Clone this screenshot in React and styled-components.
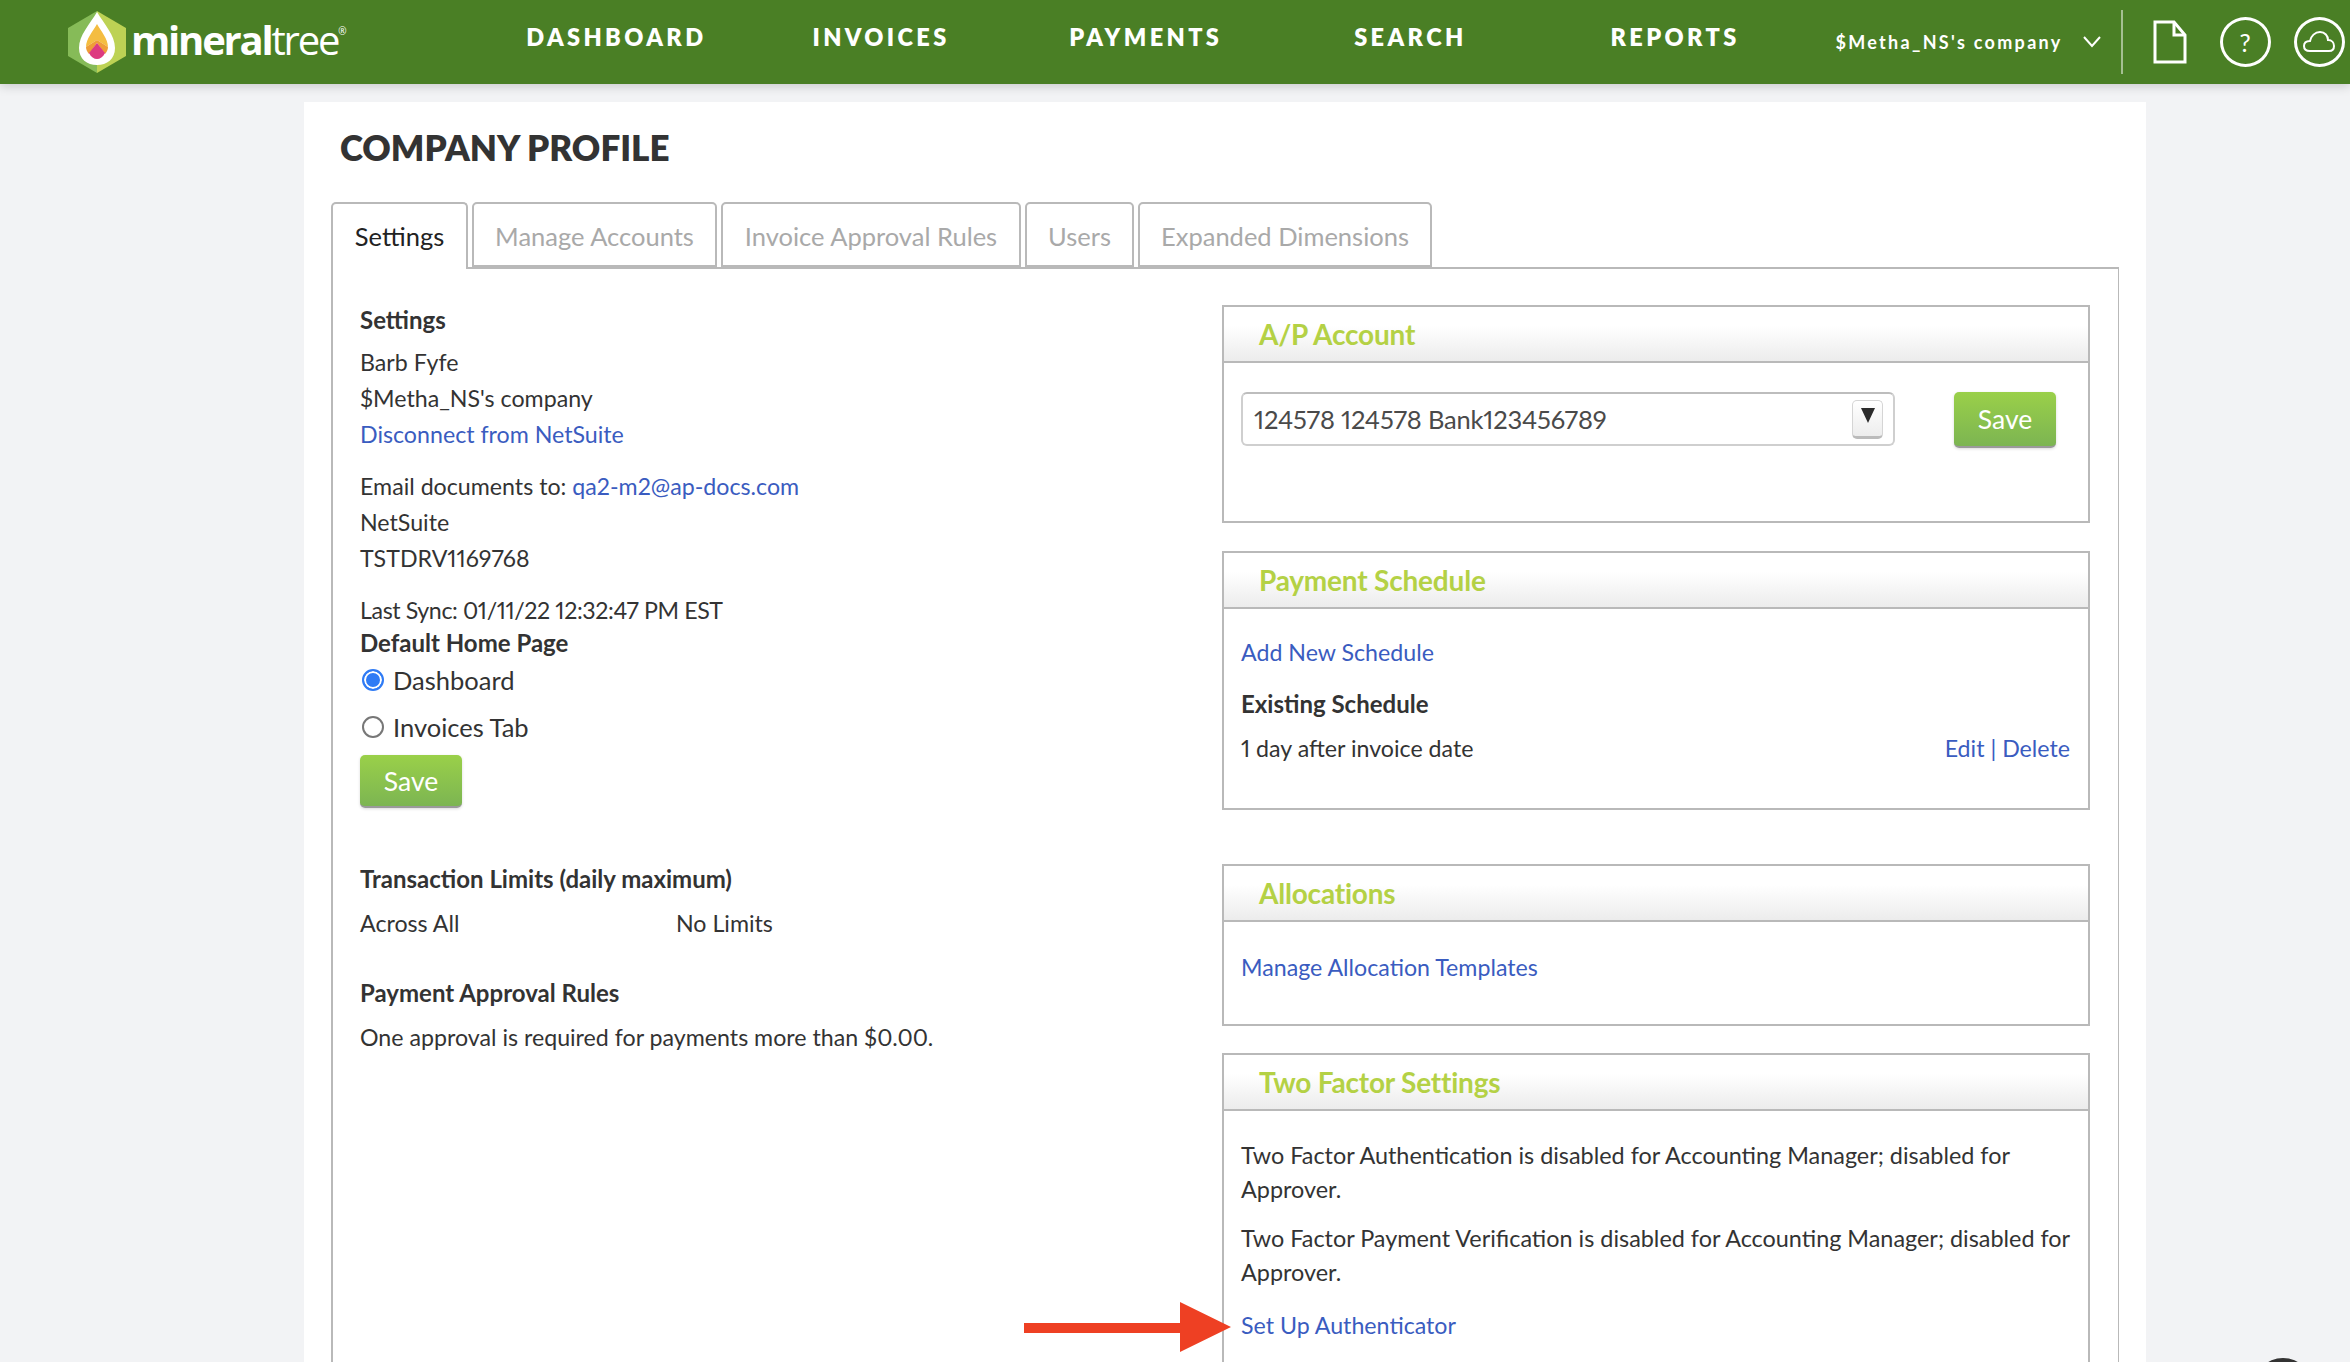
import React from "react";
import styled, { createGlobalStyle } from "styled-components";

const GlobalStyle = createGlobalStyle`
  html, body {
    margin: 0;
    padding: 0;
    height: 100%;
    overflow: hidden;
    background: #f2f3f5;
    font-family: "Lato", "Liberation Sans", sans-serif;
    font-variant-numeric: proportional-nums;
    color: #333;
  }
  * { box-sizing: border-box; }
`;

const NAV_ITEMS = ["DASHBOARD", "INVOICES", "PAYMENTS", "SEARCH", "REPORTS"];
const TABS = [
  { label: "Settings", width: 137, active: true },
  { label: "Manage Accounts", width: 245 },
  { label: "Invoice Approval Rules", width: 300 },
  { label: "Users", width: 109 },
  { label: "Expanded Dimensions", width: 294 },
];

const Page = styled.div`
  height: 100vh;
  overflow: hidden;
`;

const Header = styled.header`
  display: flex;
  align-items: center;
  height: 84px;
  padding-left: 68px;
  background: #4a7f25;
  box-shadow: 0 2px 10px rgba(0, 0, 0, 0.18);
  color: #fff;
`;

const LogoBox = styled.div`
  display: flex;
  align-items: center;
  width: 416px;
  flex: none;
`;

const LogoWord = styled.span`
  margin: -4px 0 0 5px;
  font-family: "Open Sans", sans-serif;
  font-size: 40px;
  line-height: 1;
  font-weight: 700;
  letter-spacing: -2.2px;
  color: #fff;
  span { font-weight: 400; }
  sup { font-size: 10px; font-weight: 400; vertical-align: 20px; letter-spacing: 0; }
`;

const Nav = styled.nav`
  display: grid;
  grid-template-columns: repeat(5, 264.7px);
  flex: none;
  padding-bottom: 10px;
`;

const NavItem = styled.a`
  text-align: center;
  font-size: 23.5px;
  font-weight: 800;
  letter-spacing: 3.4px;
  color: #fff;
`;

const CompanyMenu = styled.div`
  display: flex;
  align-items: center;
  margin-left: 28px;
  font-size: 18px;
  font-weight: 700;
  letter-spacing: 2.3px;
  white-space: nowrap;
`;

const Chevron = styled.svg`
  width: 18px;
  height: 12px;
  margin-left: 20px;
  flex: none;
`;

const Divider = styled.div`
  width: 2px;
  height: 64px;
  margin-left: 20px;
  background: rgba(255, 255, 255, 0.5);
  flex: none;
`;

const DocIcon = styled.svg`
  width: 34px;
  height: 44px;
  margin-left: 30px;
  flex: none;
`;

const RoundIcon = styled.div`
  display: flex;
  align-items: center;
  justify-content: center;
  width: 51px;
  height: 50px;
  margin-left: ${(p) => p.$gap}px;
  border: 3px solid #fff;
  border-radius: 50%;
  font-size: 25px;
  flex: none;
`;

const Card = styled.main`
  width: 1842px;
  margin: 18px 0 0 304px;
  padding: 0 27px 60px;
  background: #fff;
`;

const Title = styled.h1`
  margin: 0;
  padding: 23px 0 0 9px;
  height: 100px;
  font-size: 35px;
  line-height: 44px;
  font-weight: 800;
  letter-spacing: 0;
  color: #333;
`;

const TabRow = styled.div`
  display: flex;
  gap: 4px;
  height: 65px;
`;

const Tab = styled.a`
  position: relative;
  z-index: ${(p) => (p.$active ? 1 : 0)};
  width: ${(p) => p.$width}px;
  height: ${(p) => (p.$active ? 67 : 65)}px;
  padding-top: 14px;
  border: 2px solid #b9b9b9;
  border-bottom: ${(p) => (p.$active ? "0" : "2px solid #b9b9b9")};
  border-radius: 5px 5px 0 0;
  background: #fff;
  text-align: center;
  font-size: 25.5px;
  line-height: 36px;
  white-space: nowrap;
  color: ${(p) => (p.$active ? "#222" : "#a9a9a9")};
`;

const TabBody = styled.section`
  display: grid;
  grid-template-columns: auto 868px;
  justify-content: space-between;
  width: 1788px;
  min-height: 1300px;
  padding: 36px 28px 0 27px;
  border: 2px solid #b9b9b9;
  border-width: 2px 1px 1px 2px;
  font-size: 23.2px;
  line-height: 36px;
`;

const LeftColumn = styled.div`
  margin-top: -3px;
`;

const Group = styled.div`
  margin-top: ${(p) => p.$top || 0}px;
`;

const Bold = styled.div`
  margin-bottom: ${(p) => p.$after || 0}px;
  font-size: 24px;
  font-weight: 700;
  color: #333;
`;

const Line = styled.div`
  white-space: nowrap;
  letter-spacing: ${(p) => p.$tight || 0}px;
`;

const Link = styled.a`
  color: #3a5cc0;
`;

const RadioRow = styled.label`
  display: flex;
  align-items: center;
  height: 47px;
  font-size: 25.5px;
`;

const Radio = styled.input.attrs({ type: "radio", name: "home" })`
  appearance: none;
  width: 22px;
  height: 22px;
  margin: 0 9px 0 2px;
  border: 2px solid ${(p) => (p.defaultChecked ? "#2f7bf5" : "#777")};
  border-radius: 50%;
  background: ${(p) => (p.defaultChecked ? "#2f7bf5" : "#fff")};
  box-shadow: inset 0 0 0 2px #fff;
`;

const SaveButton = styled.button`
  width: 102px;
  height: ${(p) => p.$height}px;
  margin-top: ${(p) => p.$top || 0}px;
  border: 0;
  border-bottom: 2px solid #9a9a9a;
  border-radius: 5px;
  background: linear-gradient(#9ad049, #7cb552);
  box-shadow: 0 1px 3px rgba(0, 0, 0, 0.15);
  font-family: inherit;
  font-size: 26.5px;
  color: #fff;
  flex: none;
`;

const LimitRow = styled.div`
  display: grid;
  grid-template-columns: 316px auto;
  margin-top: 8px;
`;

const RightColumn = styled.div`
  display: flex;
  flex-direction: column;
`;

const Panel = styled.div`
  height: ${(p) => (p.$height ? `${p.$height}px` : "auto")};
  margin-bottom: ${(p) => p.$after || 0}px;
  border: 2px solid #b9b9b9;
`;

const PanelHead = styled.div`
  height: 56px;
  padding-left: 35px;
  border-bottom: 2px solid #b9b9b9;
  background: linear-gradient(#fff 35%, #ececec);
  font-size: 28px;
  line-height: 54px;
  font-weight: 700;
  letter-spacing: -0.2px;
  color: #b4d145;
`;

const PanelBody = styled.div`
  padding: ${(p) => p.$pad || 0}px 18px ${(p) => p.$bottom || 0}px 17px;
`;

const SelectRow = styled.div`
  display: flex;
  align-items: flex-start;
  justify-content: space-between;
  padding-right: 14px;
`;

const SelectBox = styled.div`
  display: flex;
  align-items: center;
  justify-content: space-between;
  width: 654px;
  height: 54px;
  padding: 0 10px 0 11px;
  border: 2px solid #cfcfcf;
  border-top-color: #bdbdbd;
  border-radius: 6px;
  font-size: 25.5px;
  letter-spacing: -0.2px;
  color: #4a4a4a;
`;

const SelectArrow = styled.span`
  display: flex;
  align-items: center;
  justify-content: center;
  width: 31px;
  height: 39px;
  border: 1px solid #d5d5d5;
  border-bottom: 3px solid #bbb;
  border-radius: 5px;
  background: linear-gradient(#fff, #ededed);
  &::after {
    content: "";
    margin-top: -6px;
    border-style: solid;
    border-width: 15px 7px 0;
    border-color: #2b2b2b transparent transparent;
  }
`;

const SpacedRow = styled.div`
  display: flex;
  justify-content: space-between;
`;

const FactorText = styled.p`
  margin: 0 -12px 15px 0;
  font-size: 23.4px;
  line-height: 34px;
`;

const ArrowWrap = styled.div`
  position: relative;
  margin-top: 18px;
  line-height: 36px;
`;

const RedArrow = styled.svg`
  position: absolute;
  left: -217px;
  top: -5px;
  width: 207px;
  height: 50px;
`;

const ChatBubble = styled.div`
  position: fixed;
  left: 2253px;
  top: 1358px;
  width: 60px;
  height: 60px;
  border-radius: 50%;
  background: #333;
`;

const App = () => {
  return (
    <Page>
      <GlobalStyle />
      <Header>
        <LogoBox>
          <svg width="58" height="62" viewBox="0 0 58 62">
            <path d="M29 0 L0 17 V45 L29 62 Z" fill="#86bb58" />
            <path d="M29 0 L58 17 V45 L29 62 Z" fill="#bdd254" />
            <path d="M29 1 C22 13 11 24 11 37 C11 48 19 54 29 54 C39 54 47 48 47 37 C47 24 36 13 29 1 Z" fill="#fff" />
            <path d="M29 13 C25 20 18 28 18 36 L29 29 L40 36 C40 28 33 20 29 13 Z" fill="#f4bd41" />
            <path d="M18 36 L29 29 L40 36 C40 38 39 41 37 43 L29 32 L21 43 C19 41 18 38 18 36 Z" fill="#ee9d38" />
            <path d="M29 32 L37 42 C35 46 32 48 29 48 C26 48 23 46 21 42 Z" fill="#dd3a80" />
          </svg>
          <LogoWord>
            mineral<span>tree</span>
            <sup>®</sup>
          </LogoWord>
        </LogoBox>
        <Nav>
          {NAV_ITEMS.map((item) => (
            <NavItem key={item}>{item}</NavItem>
          ))}
        </Nav>
        <CompanyMenu>
          $Metha_NS's company
          <Chevron viewBox="0 0 18 12">
            <path d="M1 1 L9 10 L17 1" fill="none" stroke="#fff" strokeWidth="2" />
          </Chevron>
        </CompanyMenu>
        <Divider />
        <DocIcon viewBox="0 0 34 44">
          <path d="M2 2 H21 L32 15 V42 H2 Z" fill="none" stroke="#fff" strokeWidth="3" />
          <path d="M21 2 V15 H32" fill="none" stroke="#fff" strokeWidth="3" />
        </DocIcon>
        <RoundIcon $gap={33}>?</RoundIcon>
        <RoundIcon $gap={23}>
          <svg width="32" height="22" viewBox="0 0 32 22">
            <path
              d="M7 20 C3 20 1 18 1 15 C1 12 3 10 7 10 C8 5 12 1 17 1 C22 1 25 5 25 9 C29 9 31 12 31 15 C31 18 29 20 26 20 Z"
              fill="none"
              stroke="#fff"
              strokeWidth="2"
            />
          </svg>
        </RoundIcon>
      </Header>

      <Card>
        <Title>COMPANY PROFILE</Title>
        <TabRow>
          {TABS.map((tab) => (
            <Tab key={tab.label} $active={tab.active} $width={tab.width}>
              {tab.label}
            </Tab>
          ))}
        </TabRow>
        <TabBody>
          <LeftColumn>
            <Bold $after={6}>Settings</Bold>
            <Line>Barb Fyfe</Line>
            <Line>$Metha_NS's company</Line>
            <Link>Disconnect from NetSuite</Link>
            <Group $top={16}>
              <Line>
                Email documents to: <Link>qa2-m2@ap-docs.com</Link>
              </Line>
              <Line>NetSuite</Line>
              <Line>TSTDRV1169768</Line>
            </Group>
            <Group $top={16}>
              <Line $tight={-0.4}>Last Sync: 01/11/22 12:32:47 PM EST</Line>
            </Group>
            <Group $top={-3}>
              <Bold>Default Home Page</Bold>
            </Group>
            <Group $top={-5}>
              <RadioRow>
                <Radio defaultChecked />
                Dashboard
              </RadioRow>
              <RadioRow>
                <Radio />
                Invoices Tab
              </RadioRow>
            </Group>
            <SaveButton $height={53} $top={5}>
              Save
            </SaveButton>
            <Group $top={53}>
              <Bold>Transaction Limits (daily maximum)</Bold>
              <LimitRow>
                <span>Across All</span>
                <span>No Limits</span>
              </LimitRow>
            </Group>
            <Group $top={34}>
              <Bold>Payment Approval Rules</Bold>
              <Group $top={8}>
                <Line>One approval is required for payments more than $0.00.</Line>
              </Group>
            </Group>
          </LeftColumn>

          <RightColumn>
            <Panel $height={218} $after={28}>
              <PanelHead>A/P Account</PanelHead>
              <PanelBody $pad={29}>
                <SelectRow>
                  <SelectBox>
                    124578 124578 Bank123456789
                    <SelectArrow />
                  </SelectBox>
                  <SaveButton $height={56}>Save</SaveButton>
                </SelectRow>
              </PanelBody>
            </Panel>

            <Panel $height={259} $after={54}>
              <PanelHead>Payment Schedule</PanelHead>
              <PanelBody $pad={25}>
                <Link>Add New Schedule</Link>
                <Group $top={16}>
                  <Bold>Existing Schedule</Bold>
                </Group>
                <Group $top={8}>
                  <SpacedRow>
                    <span>1 day after invoice date</span>
                    <Link>Edit | Delete</Link>
                  </SpacedRow>
                </Group>
              </PanelBody>
            </Panel>

            <Panel $height={162} $after={27}>
              <PanelHead>Allocations</PanelHead>
              <PanelBody $pad={27}>
                <Link>Manage Allocation Templates</Link>
              </PanelBody>
            </Panel>

            <Panel>
              <PanelHead>Two Factor Settings</PanelHead>
              <PanelBody $pad={27} $bottom={60}>
                <FactorText>
                  Two Factor Authentication is disabled for Accounting Manager; disabled for Approver.
                </FactorText>
                <FactorText>
                  Two Factor Payment Verification is disabled for Accounting Manager; disabled for Approver.
                </FactorText>
                <ArrowWrap>
                  <RedArrow viewBox="0 0 207 50">
                    <path d="M0 21 H156 V0 L207 25 L156 50 V31 H0 Z" fill="#ee4023" />
                  </RedArrow>
                  <Link>Set Up Authenticator</Link>
                </ArrowWrap>
              </PanelBody>
            </Panel>
          </RightColumn>
        </TabBody>
      </Card>
      <ChatBubble />
    </Page>
  );
};

export default App;
